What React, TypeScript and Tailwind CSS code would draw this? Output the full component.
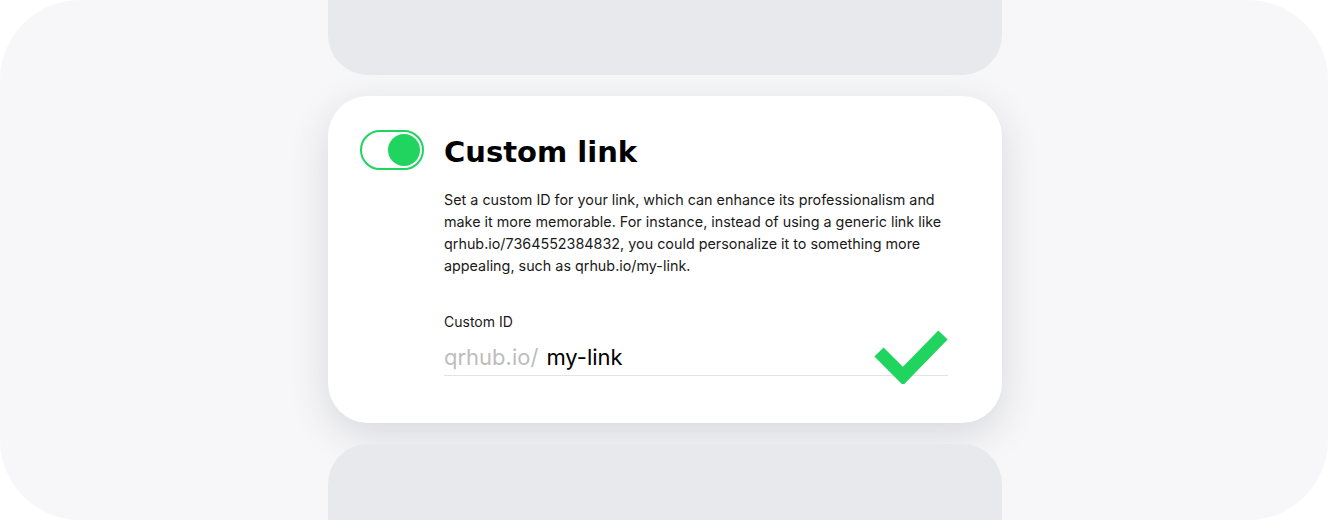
import { useState } from "react";

export default function App() {
  const [enabled, setEnabled] = useState(true);

  return (
    <div className="w-[1328px] h-[520px] bg-white overflow-hidden">
      <div className="h-full rounded-[80px] bg-[#f7f7f9] flex flex-col items-center gap-[21px] pl-[2px]">
        {/* previous card */}
        <div className="w-[674px] h-[75px] shrink-0 rounded-b-[40px] bg-[#e8e9ec]" />

        {/* custom link card */}
        <div
          className="w-[674px] h-[327px] shrink-0 rounded-[40px] bg-white shadow-[0_12px_40px_rgba(30,35,60,0.14)] pl-8 pr-[54px] pt-[34px]"
          style={{ fontFamily: "Inter, 'Liberation Sans', sans-serif" }}
        >
          <div className="flex items-center gap-5">
            <button
              onClick={() => setEnabled((v) => !v)}
              className={[
                "w-16 h-10 rounded-full border-2 border-[#1fd45f] flex items-center px-[2px] bg-white",
                enabled ? "justify-end" : "justify-start",
              ].join(" ")}
            >
              <span className="block w-8 h-8 rounded-full bg-[#1fd45f]" />
            </button>
            <h1
              className="translate-y-[2px] text-[29px] leading-[40px] font-bold text-black tracking-[0px]"
              style={{ fontFamily: "'DejaVu Sans', sans-serif" }}
            >
              Custom link
            </h1>
          </div>

          <div className="pl-[84px]">
            <p className="mt-[19px] w-[520px] text-[14.35px] leading-[22px] text-[#1a1a1a]">
              Set a custom ID for your link, which can enhance its professionalism and
              <br />
              make it more memorable. For instance, instead of using a generic link like
              <br />
              qrhub.io/7364552384832, you could personalize it to something more
              <br />
              appealing, such as qrhub.io/my-link.
            </p>

            <div className="mt-[35px] text-[14px] leading-[20px] text-[#1a1a1a]">Custom ID</div>

            <div className="relative mt-[5px] flex items-end h-[39px] border-b border-[#e3e3e3] pb-[4px]">
              <span className="text-[22px] leading-[27px] text-[#bdbdbd]">qrhub.io/</span>
              <span className="ml-2 text-[22px] leading-[27px] text-black">my-link</span>
              <svg
                className="absolute right-0 top-[-9px]"
                width="74"
                height="56"
                viewBox="0 0 74 56"
              >
                <path d="M5 24 L29 48 L69 7" fill="none" stroke="#1fd45f" strokeWidth="13" />
              </svg>
            </div>
          </div>
        </div>

        {/* next card */}
        <div className="w-[674px] h-[100px] shrink-0 rounded-t-[40px] bg-[#e8e9ec]" />
      </div>
    </div>
  );
}
